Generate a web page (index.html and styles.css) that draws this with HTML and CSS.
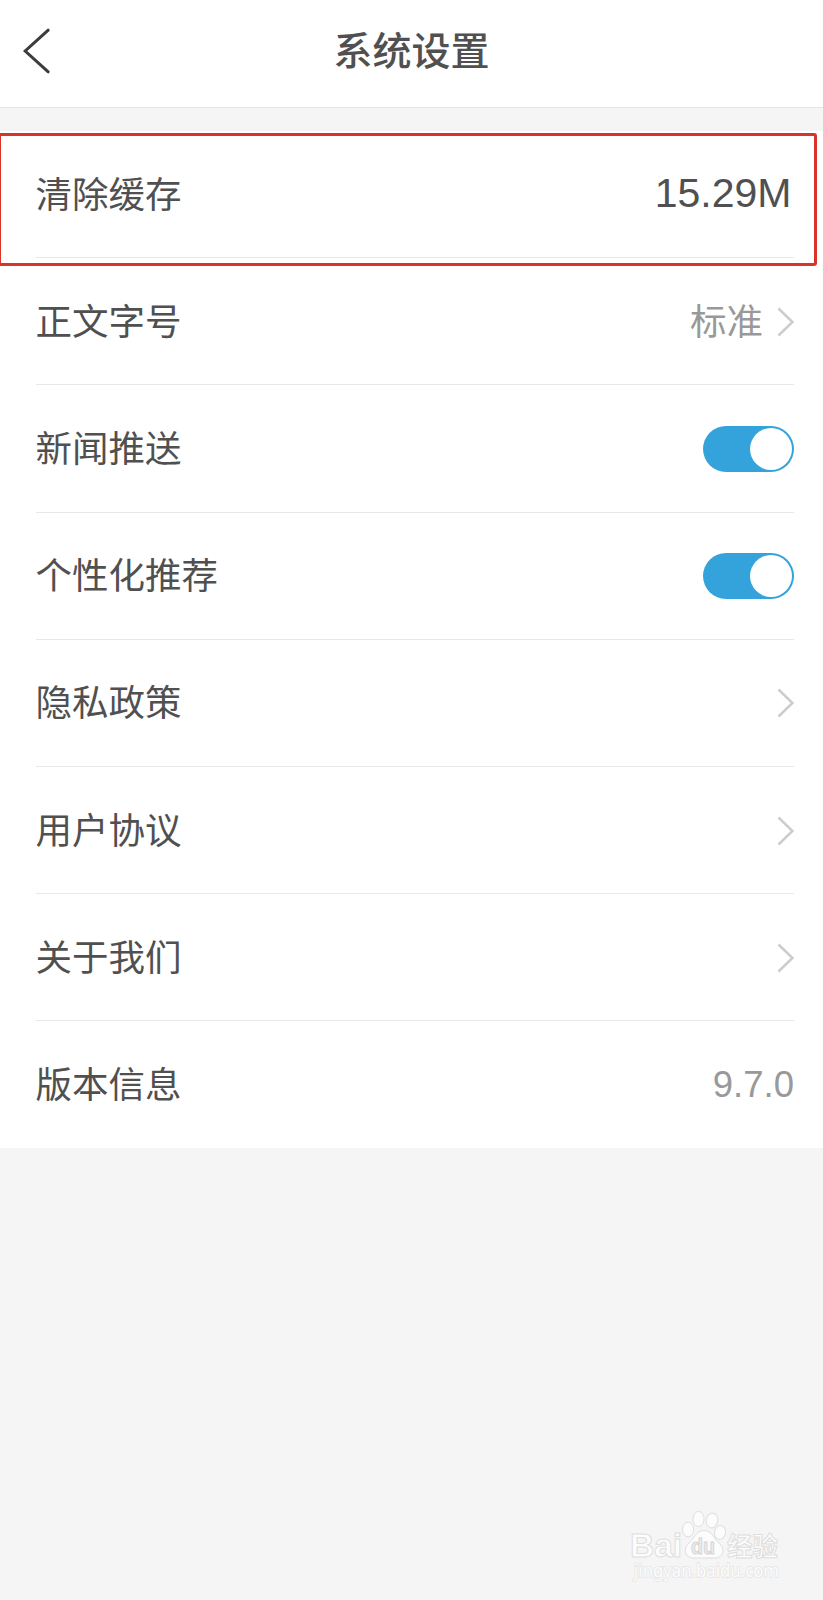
FILE: index.html
```html
<!DOCTYPE html>
<html lang="zh-CN">
<head>
<meta charset="utf-8">
<title>系统设置</title>
<link rel="stylesheet" href="styles.css">
</head>
<body>
<div class="screen">
  <header class="topbar">
    <svg class="back" width="30" height="48" viewBox="0 0 30 48"><path d="M26.2 3.2 3.2 24 26.2 44.8"/></svg>
    <h1 class="title">系统设置</h1>
  </header>
  <main class="list">
    <div class="row"><span class="label">清除缓存</span><span class="cache">15.29M</span></div>
    <div class="row"><span class="label">正文字号</span><span class="value">标准</span><svg class="chevron" width="17" height="30" viewBox="0 0 17 30"><path d="M1.5 1.5 15.500 15 1.5 28.5"/></svg></div>
    <div class="row"><span class="label">新闻推送</span><span class="toggle"><span class="knob"></span></span></div>
    <div class="row"><span class="label">个性化推荐</span><span class="toggle"><span class="knob"></span></span></div>
    <div class="row"><span class="label">隐私政策</span><svg class="chevron" width="17" height="30" viewBox="0 0 17 30"><path d="M1.5 1.5 15.500 15 1.5 28.5"/></svg></div>
    <div class="row"><span class="label">用户协议</span><svg class="chevron" width="17" height="30" viewBox="0 0 17 30"><path d="M1.5 1.5 15.500 15 1.5 28.5"/></svg></div>
    <div class="row"><span class="label">关于我们</span><svg class="chevron" width="17" height="30" viewBox="0 0 17 30"><path d="M1.5 1.5 15.500 15 1.5 28.5"/></svg></div>
    <div class="row"><span class="label">版本信息</span><span class="version">9.7.0</span></div>
  </main>
  <div class="highlight"></div>
  <svg class="watermark" width="170" height="84" viewBox="0 0 170 84">
    <g class="mark">
      <text class="brand" x="3" y="47" textLength="52" lengthAdjust="spacingAndGlyphs">Bai</text>
      <ellipse cx="61" cy="19.500" rx="5.6" ry="7.3"/>
      <ellipse cx="71.500" cy="9" rx="5.600" ry="7.500"/>
      <ellipse cx="85" cy="10.500" rx="5.700" ry="7.500" transform="rotate(12 85 10.500)"/>
      <ellipse cx="93" cy="22.500" rx="5.500" ry="7" transform="rotate(12 93 22.500)"/>
      <path d="M77 20.500C69 20.500 67 29 62 33C55.500 39 58 48 67 48H87C97 48 98.500 39 92 33C87 29 85 20.500 77 20.500Z"/>
      <text class="du" x="64" y="44" textLength="24" lengthAdjust="spacingAndGlyphs">du</text>
      <text class="jingyan" x="100" y="45.500" textLength="51" lengthAdjust="spacingAndGlyphs">经验</text>
      <text class="url" x="7" y="66.500" textLength="145" lengthAdjust="spacingAndGlyphs">jingyan.baidu.com</text>
    </g>
  </svg>
</div>
</body>
</html>
```
FILE: styles.css
```css
* { box-sizing: border-box; }
body {
  margin: 0;
  background: #f5f5f5;
  color: #505050;
  font-family: "Liberation Sans", "Noto Sans CJK SC", sans-serif;
}
.screen { position: relative; height: 1600px; overflow: hidden; }
.topbar {
  display: grid;
  grid-template-columns: 60px 1fr 60px;
  align-items: center;
  height: 108px;
  padding-bottom: 6px;
  background: #fff;
  border-bottom: 1px solid #e4e4e4;
}
.back { margin-left: 22px; fill: none; stroke: #3c3c3c; stroke-width: 3; stroke-linecap: round; }
.title {
  margin: 0;
  padding-bottom: 6px;
  text-align: center;
  font: 500 39px/50px "Noto Sans CJK SC", sans-serif;
}
.list { margin-top: 23px; padding: 0 29px 0 36px; background: #fff; }
.row {
  display: flex;
  align-items: center;
  height: 127.2px;
  padding-top: 1px;
  border-bottom: 1.5px solid #e8e8e8;
}
.row:last-child { height: 126.6px; border-bottom: 0; }
.label, .value { padding-bottom: 4px; font: 36.5px/50px "Noto Sans CJK SC", sans-serif; }
.label { flex: 1; margin-left: -0.5px; }
.value { margin-right: 14px; color: #999; }
.cache { margin-right: 2.5px; padding-bottom: 3px; font-size: 41px; line-height: 50px; }
.version { color: #999; font-size: 36.5px; line-height: 50px; }
.chevron { fill: none; stroke: #cdcdcd; stroke-width: 2.6; }
.toggle {
  display: flex;
  justify-content: flex-end;
  width: 91px;
  height: 46px;
  padding: 2px;
  border-radius: 23px;
  background: #34a3dc;
}
.knob { width: 42px; height: 42px; border-radius: 50%; background: #fff; }
.highlight {
  position: absolute;
  left: -2px;
  top: 133px;
  width: 819px;
  height: 133px;
  border: 3px solid #d9342b;
  border-radius: 3px;
}
.watermark { position: absolute; left: 627px; top: 1510px; overflow: visible; }
.mark { fill: #fcfcfc; stroke: #dedede; stroke-width: 1; font-family: "Liberation Sans", "Noto Sans CJK SC", sans-serif; }
.brand { font-size: 34px; font-weight: 700; }
.du { font-size: 22px; font-weight: 700; fill: #ececec; stroke: #d4d4d4; }
.jingyan { font-family: "Noto Sans CJK SC", sans-serif; font-size: 26px; font-weight: 700; }
.url { font-family: "Noto Sans", sans-serif; font-size: 18px; stroke: #e4e4e4; stroke-width: 1.5; paint-order: stroke; }
```
